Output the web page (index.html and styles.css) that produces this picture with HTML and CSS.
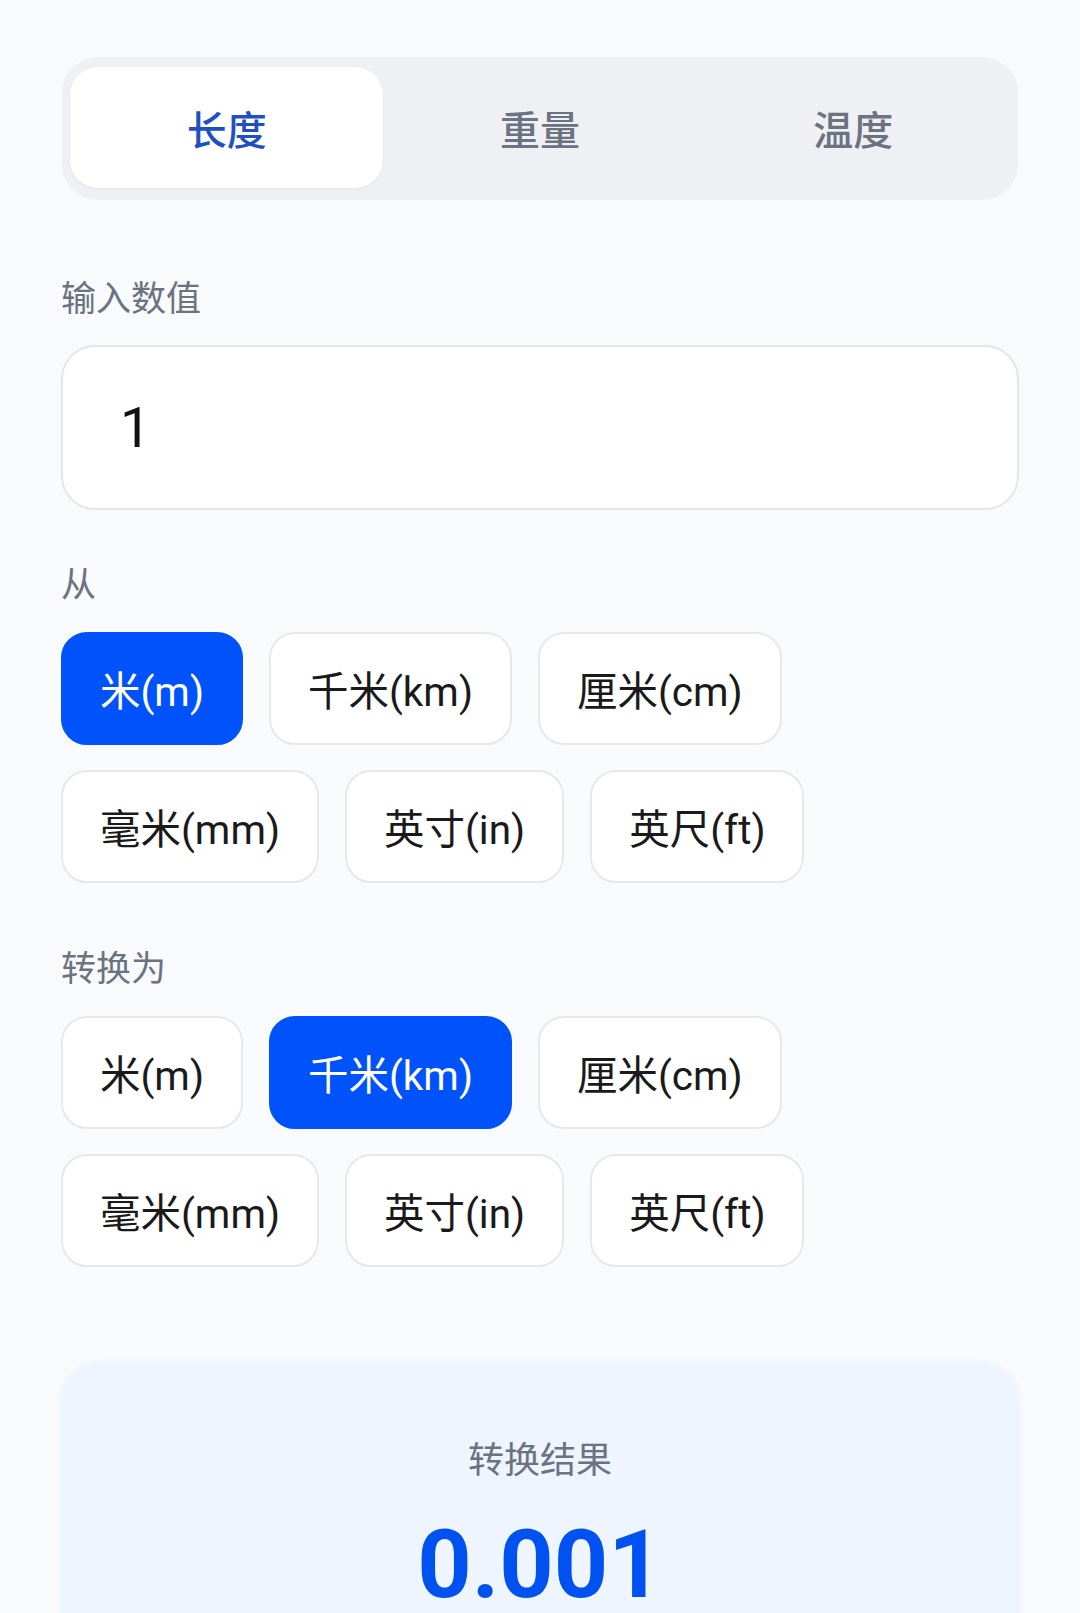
FILE: index.html
```html
<!DOCTYPE html>
<html lang="zh-CN">
<head>
<meta charset="utf-8">
<title>单位转换</title>
<link rel="stylesheet" href="styles.css">
</head>
<body>
<main class="page">
  <nav class="tabs">
    <button class="tab tab-active">长度</button>
    <button class="tab">重量</button>
    <button class="tab">温度</button>
  </nav>

  <section class="field field-input">
    <div class="label">输入数值</div>
    <input class="value-input" type="text" value="1">
  </section>

  <section class="field field-from">
    <div class="label">从</div>
    <div class="units">
      <button class="unit unit-active">米(m)</button>
      <button class="unit">千米(km)</button>
      <button class="unit">厘米(cm)</button>
      <button class="unit">毫米(mm)</button>
      <button class="unit">英寸(in)</button>
      <button class="unit">英尺(ft)</button>
    </div>
  </section>

  <section class="field field-to">
    <div class="label">转换为</div>
    <div class="units">
      <button class="unit">米(m)</button>
      <button class="unit unit-active">千米(km)</button>
      <button class="unit">厘米(cm)</button>
      <button class="unit">毫米(mm)</button>
      <button class="unit">英寸(in)</button>
      <button class="unit">英尺(ft)</button>
    </div>
  </section>

  <section class="result">
    <div class="result-label">转换结果</div>
    <div class="result-value">0.001</div>
  </section>
</main>
</body>
</html>
```

FILE: styles.css
```css
* {
  box-sizing: border-box;
}

html, body {
  margin: 0;
  padding: 0;
  background: #f8fafc;
}

body {
  font-family: Roboto, "Noto Sans CJK SC", sans-serif;
  color: #1a1a1a;
}

.page {
  padding: 57px 61px 0 61px;
}

.tabs {
  display: grid;
  grid-template-columns: 1fr 1fr 1fr;
  padding: 10px 8px 12px 8px;
  background: #eef0f4;
  border-radius: 36px;
  height: 143px;
  margin: 0 1px 0 1px;
}

.tab {
  font-family: Roboto, "Noto Sans CJK SC", sans-serif;
  font-size: 40px;
  font-weight: 500;
  color: #6b7280;
  background: transparent;
  border: none;
  border-radius: 28px;
  padding: 0;
  height: 121px;
}

.tab-active {
  background: #ffffff;
  color: #1e50c4;
  box-shadow: 0 1px 3px rgba(0, 0, 0, 0.05);
}

.field-input {
  margin-top: 72px;
}

.field-from {
  margin-top: 48px;
}

.field-to {
  margin-top: 59px;
}

.label {
  font-size: 35px;
  line-height: 48px;
  padding-top: 4px;
  color: #6b7280;
}

.value-input {
  display: block;
  width: 100%;
  height: 165px;
  margin-top: 21px;
  padding: 0 0 0 57px;
  border: 2px solid #e3e6ea;
  border-radius: 34px;
  background: #ffffff;
  font-family: Roboto, "Noto Sans CJK SC", sans-serif;
  font-size: 55px;
  color: #111111;
  outline: none;
}

.units {
  display: flex;
  flex-wrap: wrap;
  gap: 25px 26px;
  margin-top: 22px;
}

.unit {
  display: inline-flex;
  align-items: center;
  justify-content: center;
  height: 113px;
  padding: 0 37px;
  background: #ffffff;
  border: 2px solid #e6e8eb;
  border-radius: 26px;
  font-family: Roboto, "Noto Sans CJK SC", sans-serif;
  font-size: 40.5px;
  color: #1a1a1a;
}

.unit-active {
  background: #0052fa;
  border-color: #0052fa;
  color: #ffffff;
}

.result {
  margin-top: 96px;
  background: #eef5ff;
  border-radius: 40px;
  padding: 74px 0 120px 0;
  text-align: center;
  box-shadow: 0 0 6px rgba(200, 215, 235, 0.25);
}

.result-label {
  font-size: 36px;
  line-height: 48px;
  color: #6b7280;
}

.result-value {
  margin-top: 35px;
  font-size: 95px;
  line-height: 90px;
  font-weight: 700;
  color: #0052f0;
}
```
